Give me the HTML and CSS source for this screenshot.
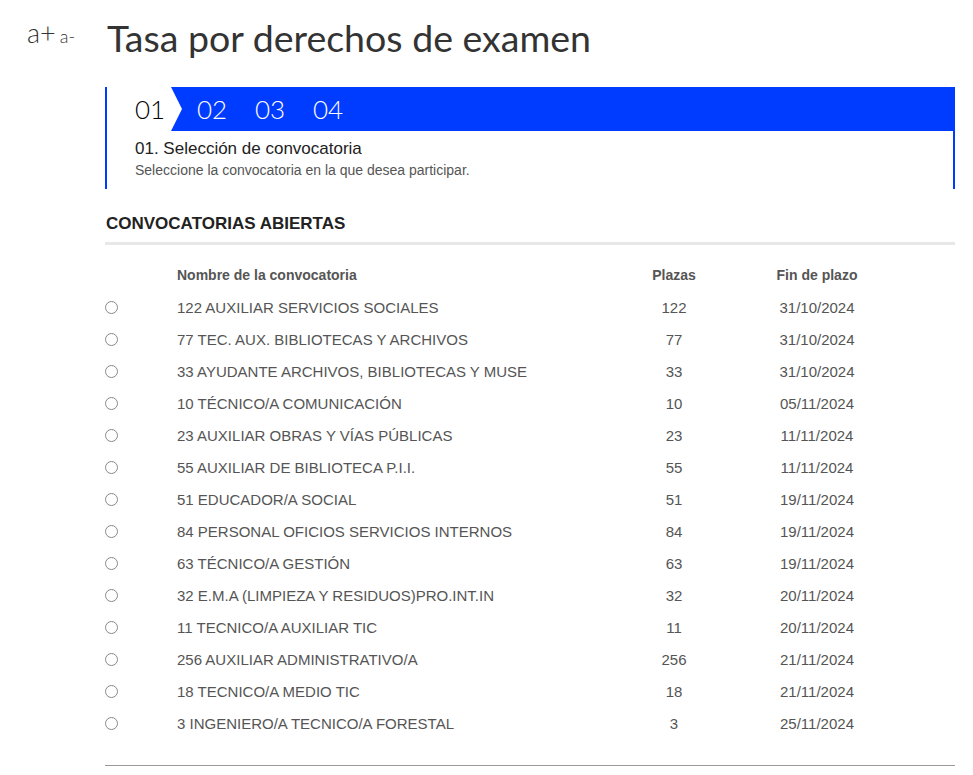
FILE: index.html
```html
<!DOCTYPE html>
<html lang="es">
<head>
<meta charset="utf-8">
<title>Tasa por derechos de examen</title>
<link rel="stylesheet" href="styles.css">
</head>
<body>
<div class="page">
  <div class="fontsize">
    <span class="fs-plus">a+</span>
    <span class="fs-minus">a-</span>
  </div>
  <main class="main">
    <h1 class="title">Tasa por derechos de examen</h1>
    <section class="wizard">
      <div class="steps">
        <div class="step active">01</div>
        <div class="step">02</div>
        <div class="step">03</div>
        <div class="step">04</div>
      </div>
      <div class="step-info">
        <div class="step-title">01. Selección de convocatoria</div>
        <div class="step-desc">Seleccione la convocatoria en la que desea participar.</div>
      </div>
    </section>
    <h2 class="section-title">CONVOCATORIAS ABIERTAS</h2>
    <div class="table">
      <div class="row head">
        <span></span>
        <span class="name">Nombre de la convocatoria</span>
        <span class="num">Plazas</span>
        <span class="date">Fin de plazo</span>
      </div>
      <label class="row"><span class="radio"></span><span class="name">122 AUXILIAR SERVICIOS SOCIALES</span><span class="num">122</span><span class="date">31/10/2024</span></label>
      <label class="row"><span class="radio"></span><span class="name">77 TEC. AUX. BIBLIOTECAS Y ARCHIVOS</span><span class="num">77</span><span class="date">31/10/2024</span></label>
      <label class="row"><span class="radio"></span><span class="name">33 AYUDANTE ARCHIVOS, BIBLIOTECAS Y MUSE</span><span class="num">33</span><span class="date">31/10/2024</span></label>
      <label class="row"><span class="radio"></span><span class="name">10 TÉCNICO/A COMUNICACIÓN</span><span class="num">10</span><span class="date">05/11/2024</span></label>
      <label class="row"><span class="radio"></span><span class="name">23 AUXILIAR OBRAS Y VÍAS PÚBLICAS</span><span class="num">23</span><span class="date">11/11/2024</span></label>
      <label class="row"><span class="radio"></span><span class="name">55 AUXILIAR DE BIBLIOTECA P.I.I.</span><span class="num">55</span><span class="date">11/11/2024</span></label>
      <label class="row"><span class="radio"></span><span class="name">51 EDUCADOR/A SOCIAL</span><span class="num">51</span><span class="date">19/11/2024</span></label>
      <label class="row"><span class="radio"></span><span class="name">84 PERSONAL OFICIOS SERVICIOS INTERNOS</span><span class="num">84</span><span class="date">19/11/2024</span></label>
      <label class="row"><span class="radio"></span><span class="name">63 TÉCNICO/A GESTIÓN</span><span class="num">63</span><span class="date">19/11/2024</span></label>
      <label class="row"><span class="radio"></span><span class="name">32 E.M.A (LIMPIEZA Y RESIDUOS)PRO.INT.IN</span><span class="num">32</span><span class="date">20/11/2024</span></label>
      <label class="row"><span class="radio"></span><span class="name">11 TECNICO/A AUXILIAR TIC</span><span class="num">11</span><span class="date">20/11/2024</span></label>
      <label class="row"><span class="radio"></span><span class="name">256 AUXILIAR ADMINISTRATIVO/A</span><span class="num">256</span><span class="date">21/11/2024</span></label>
      <label class="row"><span class="radio"></span><span class="name">18 TECNICO/A MEDIO TIC</span><span class="num">18</span><span class="date">21/11/2024</span></label>
      <label class="row"><span class="radio"></span><span class="name">3 INGENIERO/A TECNICO/A FORESTAL</span><span class="num">3</span><span class="date">25/11/2024</span></label>
    </div>
    <hr class="bottom-rule">
  </main>
</div>
</body>
</html>
```

FILE: styles.css
```css
html, body {
  margin: 0;
  padding: 0;
  background: #fff;
}
body {
  font-family: "Liberation Sans", Arial, sans-serif;
  color: #333;
}
.page {
  display: flex;
  align-items: flex-start;
  padding-left: 27px;
}
.fontsize {
  width: 78px;
  padding-top: 16px;
  font-family: "Lato", sans-serif;
  color: #333;
  white-space: nowrap;
}
.fs-plus {
  font-size: 27px;
  font-weight: 300;
}
.fs-minus {
  font-size: 18px;
  font-weight: 300;
}
.main {
  width: 850px;
}
.title {
  margin: 0;
  padding-top: 14px;
  height: 87px;
  box-sizing: border-box;
  font-family: "Lato", sans-serif;
  font-weight: 400;
  font-size: 37.5px;
  line-height: 48px;
  color: #333;
  padding-left: 2px;
}
.wizard {
  border-left: 2px solid #003cff;
  border-right: 2px solid #003cff;
  height: 102px;
  box-sizing: border-box;
}
.steps {
  display: flex;
  align-items: center;
  height: 44px;
  background: #003cff;
  margin: 0 -2px 0 0;
}
.step {
  font-family: "Lato", sans-serif;
  font-weight: 300;
  font-size: 26px;
  color: #fff;
  width: 58px;
  line-height: 44px;
}
.step.active {
  position: relative;
  color: #000;
  background: #fff;
  width: 64px;
  padding-left: 28px;
  box-sizing: border-box;
  margin-right: 26px;
}
.step.active::after {
  content: "";
  position: absolute;
  top: 0;
  right: -11px;
  border-top: 22px solid transparent;
  border-bottom: 22px solid transparent;
  border-left: 11px solid #fff;
}
.step-info {
  padding: 8px 0 0 28px;
}
.step-title {
  font-size: 17px;
  line-height: 20px;
  color: #222;
}
.step-desc {
  font-size: 14px;
  line-height: 16px;
  color: #555;
  margin-top: 3px;
}
.section-title {
  margin: 0;
  padding: 25px 0 0 1px;
  font-size: 17px;
  line-height: 20px;
  font-weight: 700;
  color: #222;
  height: 56px;
  box-sizing: border-box;
  border-bottom: 3px solid #e8e8e8;
}
.table {
  padding-top: 14px;
}
.row {
  display: grid;
  grid-template-columns: 72px 416px 162px 124px 1fr;
  align-items: center;
  height: 32px;
  font-size: 15px;
  color: #555;
}
.row.head {
  font-size: 14px;
  font-weight: 700;
  color: #555;
}
.num, .date {
  text-align: center;
}
.radio {
  width: 11px;
  height: 11px;
  border: 1px solid #888;
  border-radius: 50%;
  margin-left: 0;
}
.bottom-rule {
  margin: 26px 0 0;
  border: 0;
  border-top: 1px solid #999;
}
```
